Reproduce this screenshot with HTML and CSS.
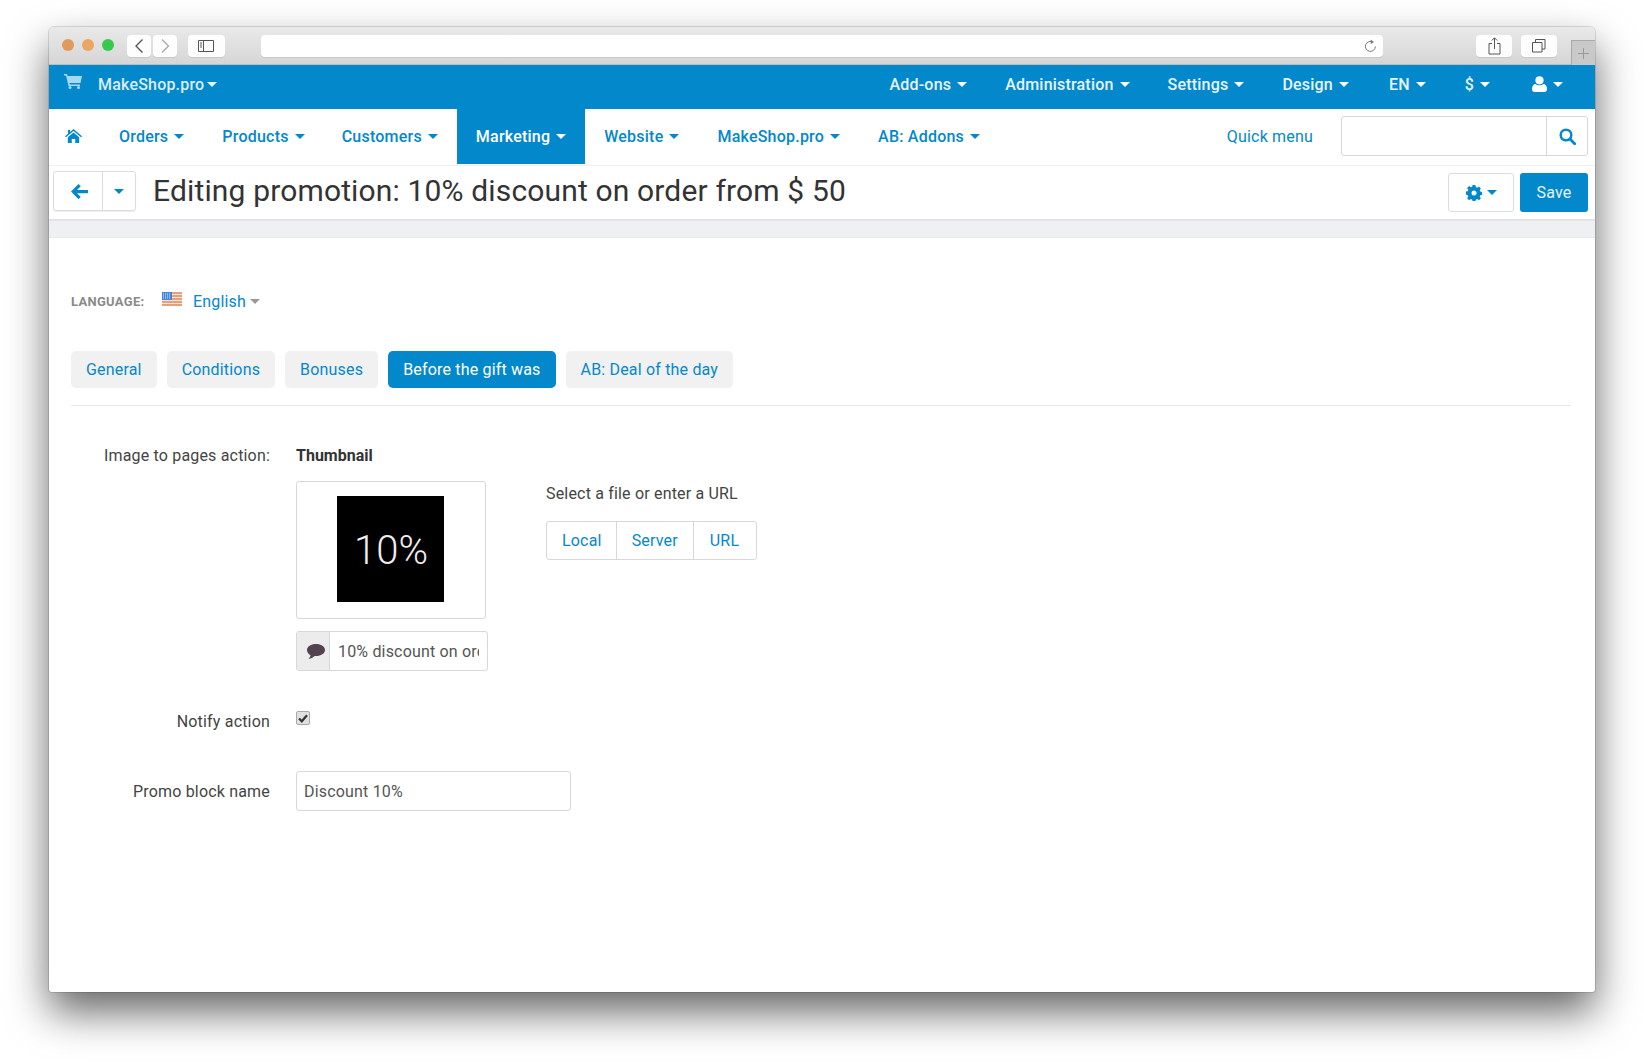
FILE: index.html
```html
<!DOCTYPE html>
<html lang="en">
<head>
<meta charset="utf-8">
<title>Editing promotion</title>
<link rel="stylesheet" href="styles.css">
</head>
<body>
<div class="window">
  <header class="chrome">
    <div class="lights"><i class="light red"></i><i class="light amber"></i><i class="light green"></i></div>
    <span class="cbtn nav-prev"><svg width="12" height="16" viewBox="0 0 12 16"><path d="M9.5 1.5 3 8l6.5 6.5" fill="none" stroke="#555" stroke-width="1.4"/></svg></span>
    <span class="cbtn nav-next"><svg width="12" height="16" viewBox="0 0 12 16"><path d="M3 1.5 9.5 8 3 14.5" fill="none" stroke="#aaa" stroke-width="1.4"/></svg></span>
    <span class="cbtn sidebar"><svg width="16" height="13" viewBox="0 0 16 13"><path d="M.5.5h15v11H.5zM5.5.5v11M2 3h2M2 5h2M2 7h2" fill="none" stroke="#555" stroke-width="1"/></svg></span>
    <span class="urlbar"><svg width="13" height="14" viewBox="0 0 13 14"><path d="M8.8 3A5 5 0 1 0 11.4 7.5" fill="none" stroke="#777" stroke-width="1"/><path d="M6.5.6 10 3 6.8 5z" fill="#777"/></svg></span>
    <span class="cbtn share"><svg width="13" height="18" viewBox="0 0 13 18"><path d="M4 6.5H1v10.5h11V6.500H9M6.500 12V1M3.800 3.500 6.500.8l2.700 2.700" fill="none" stroke="#555" stroke-width="1"/></svg></span>
    <span class="cbtn tabs-btn"><svg width="14" height="14" viewBox="0 0 14 14"><path d="M.5 3.500h9.500v9.500H.5zM3.500 3.500V.5H13v9.500h-3" fill="none" stroke="#555" stroke-width="1"/></svg></span>
    <span class="newtab"><svg width="11" height="11" viewBox="0 0 11 11"><path d="M5.500 0v11M0 5.500h11" stroke="#999" stroke-width="1"/></svg></span>
  </header>

  <div class="topbar">
    <a class="brand-icon"><svg width="18" height="15" viewBox="0 0 18 15"><path d="M0 0h3l.6 2H18l-1.500 7H5.500l.4 1.500H16V12H4.500L2 1.500H0z" fill="#a9d8f5"/><circle cx="6" cy="13.500" r="1.500" fill="#a9d8f5"/><circle cx="14.500" cy="13.500" r="1.500" fill="#a9d8f5"/></svg></a>
    <a class="brand">MakeShop.pro<i class="caret caret-light"></i></a>
    <nav class="topmenu">
      <a class="tm addons">Add-ons<i class="caret"></i></a>
      <a class="tm admin">Administration<i class="caret"></i></a>
      <a class="tm settings">Settings<i class="caret"></i></a>
      <a class="tm designm">Design<i class="caret"></i></a>
      <a class="tm en">EN<i class="caret"></i></a>
      <a class="tm dollar">$<i class="caret"></i></a>
      <a class="tm usr"><svg width="15" height="16" viewBox="0 0 15 16"><circle cx="7.500" cy="4.300" r="4.100" fill="#fff"/><path d="M0 13c0-3 1.500-5 3.500-5 1 .8 2.500 1.300 4 1.300s3-.5 4-1.300c2 0 3.500 2 3.500 5 0 2-1 3-2.500 3h-10C1 16 0 15 0 13z" fill="#fff"/></svg><i class="caret"></i></a>
    </nav>
  </div>

  <div class="mainnav">
    <a class="home"><svg width="17" height="14" viewBox="0 0 17 14"><path d="M8.500 0 17 7.200l-1 1.100-7.500-6.300L1 8.300 0 7.200l3-2.500V1h2.200v1.900zM2.800 8.300 8.500 3.500l5.700 4.800V14h-4V10H6.800v4h-4z" fill="#0388cc"/></svg></a>
    <a class="mi orders">Orders<i class="caret caret-blue"></i></a>
    <a class="mi products">Products<i class="caret caret-blue"></i></a>
    <a class="mi customers">Customers<i class="caret caret-blue"></i></a>
    <a class="mi active">Marketing<i class="caret"></i></a>
    <a class="mi website">Website<i class="caret caret-blue"></i></a>
    <a class="mi mshop">MakeShop.pro<i class="caret caret-blue"></i></a>
    <a class="mi addons2">AB: Addons<i class="caret caret-blue"></i></a>
    <a class="quick">Quick menu</a>
    <div class="search">
      <span class="search-field"></span>
      <span class="search-btn"><svg width="17" height="17" viewBox="0 0 17 17"><circle cx="7" cy="7" r="5.300" fill="none" stroke="#0388cc" stroke-width="2.500"/><path d="m11 11 4.700 4.700" stroke="#0388cc" stroke-width="2.800" stroke-linecap="round"/></svg></span>
    </div>
  </div>

  <div class="toolbar">
    <div class="backgroup">
      <span class="back"><svg width="17" height="15" viewBox="0 0 17 15"><path d="M7.500 0 9.800 2.300 6 6h11v3.200H6l3.800 3.700-2.300 2.300L0 7.600z" fill="#0388cc"/></svg></span>
      <span class="backdrop"><i class="caret caret-blue"></i></span>
    </div>
    <h1 class="title">Editing promotion: 10% discount on order from $ 50</h1>
    <span class="gearbtn"><svg width="16" height="16" viewBox="0 0 16 16"><path d="M6.600 0h2.800l.4 2.100 1.300.6 1.800-1.200 2 2-1.200 1.800.6 1.300 2.100.4v2.800l-2.100.4-.6 1.300 1.200 1.800-2 2-1.800-1.200-1.300.6-.4 2.100H6.600l-.4-2.100-1.300-.6-1.800 1.200-2-2 1.200-1.800-.6-1.300L-.4 9.400V6.600l2.100-.4.600-1.300L1.100 3.100l2-2 1.800 1.200 1.300-.6z" fill="#0388cc"/><circle cx="8" cy="8" r="2.500" fill="#fff"/></svg><i class="caret caret-blue"></i></span>
    <span class="save">Save</span>
  </div>
  <div class="band"></div>

  <main class="content">
    <div class="langrow">
      <span class="langlabel">LANGUAGE:</span>
      <svg class="flag" width="20" height="14" viewBox="0 0 20 14"><rect width="20" height="14" fill="#f4e3d8"/><path d="M0 1h20M0 4h20M0 7h20M0 10h20M0 13h20" stroke="#e08a5a" stroke-width="1.500"/><rect width="10" height="8" fill="#4a86d8"/><path d="M1 2h8M1 4h8M1 6h8" stroke="#cfe2f7" stroke-dasharray="1 1"/></svg>
      <a class="langlink">English</a><i class="caret caret-grey"></i>
    </div>

    <div class="tabs">
      <a class="tab">General</a>
      <a class="tab">Conditions</a>
      <a class="tab">Bonuses</a>
      <a class="tab tab-on">Before the gift was</a>
      <a class="tab">AB: Deal of the day</a>
    </div>

    <div class="row row-image">
      <span class="label">Image to pages action:</span>
      <div class="imagecol">
        <strong class="thumbtitle">Thumbnail</strong>
        <div class="thumbbox"><span class="thumb">10%</span></div>
        <div class="altgroup">
          <span class="altaddon"><svg width="18" height="15" viewBox="0 0 18 15"><path d="M9 0c5 0 9 2.600 9 6s-4 6-9 6H7.600C6 13.500 4 14.500 1.500 15c1-1 1.700-2 2-3.700C1.400 10.200 0 8.200 0 6c0-3.400 4-6 9-6z" fill="#53424f"/></svg></span>
          <input class="altinput" type="text" value="10% discount on order from $ 50" aria-label="Alt text">
        </div>
      </div>
      <div class="filecol">
        <p class="filetext">Select a file or enter a URL</p>
        <div class="filebtns">
          <a class="fb fb-local">Local</a><a class="fb">Server</a><a class="fb fb-url">URL</a>
        </div>
      </div>
    </div>

    <div class="row row-notify">
      <span class="label">Notify action</span>
      <span class="check"><svg width="10" height="9" viewBox="0 0 10 9"><path d="M1 4.500 3.800 7.300 9 1.200" fill="none" stroke="#333" stroke-width="2.200"/></svg></span>
    </div>

    <div class="row row-promo">
      <span class="label">Promo block name</span>
      <input class="promoinput" type="text" value="Discount 10%" aria-label="Promo block name">
    </div>
  </main>
</div>
</body>
</html>
```
FILE: styles.css
```css
* { box-sizing: border-box; }
html, body { height: 100%; }
body {
  margin: 0;
  background: #fff;
  font-family: Roboto, "Liberation Sans", sans-serif;
  font-size: 16px;
  letter-spacing: .18px;
  color: #444;
  overflow: hidden;
  padding: 27px 49px 0;
}
a { color: #0388cc; text-decoration: none; }
i { display: inline-block; font-style: normal; }

.window {
  width: 1546px;
  height: 965px;
  background: #fff;
  border-radius: 5px 5px 3px 3px;
  box-shadow: 0 20px 42px rgba(0,0,0,.6), 0 0 0 1px rgba(0,0,0,.12);
  overflow: hidden;
  display: flex;
  flex-direction: column;
}

/* browser chrome */
.chrome {
  height: 38px;
  flex: none;
  display: flex;
  align-items: flex-start;
  padding: 8px 0 0 13px;
  background: linear-gradient(#e9e9e9, #d6d6d6);
  border-bottom: 1px solid #bdbdbd;
}
.lights { display: flex; gap: 8px; padding-top: 4px; margin-right: 12px; }
.light { width: 12px; height: 12px; border-radius: 50%; }
.red { background: #e29a5a; }
.amber { background: #eba661; }
.green { background: #37c94b; }
.cbtn {
  height: 22px;
  background: #fdfdfd;
  border-radius: 4px;
  display: flex;
  align-items: center;
  justify-content: center;
  box-shadow: 0 1px 0 #c8c8c8;
}
.nav-prev { width: 24px; margin-left: 1px; }
.nav-next { width: 24px; margin-left: 2px; }
.sidebar { width: 37px; margin-left: 11px; }
.urlbar {
  width: 1125px;
  height: 22px;
  margin-left: 36px;
  background: #fff;
  border-radius: 4px;
  box-shadow: 0 1px 0 #c8c8c8;
  display: flex;
  align-items: center;
  justify-content: flex-end;
  padding-right: 6px;
}
.share { width: 36px; margin-left: 93px; }
.tabs-btn { width: 36px; margin-left: 9px; }
.newtab {
  width: 24px;
  height: 25px;
  margin: 5px 0 0 14px;
  background: #c9c9c9;
  border-left: 1px solid #aaa;
  border-top: 1px solid #aaa;
  display: flex;
  align-items: center;
  justify-content: center;
}

/* blue bar */
.topbar {
  height: 44px;
  flex: none;
  padding-bottom: 6px;
  background: #0388cc;
  display: flex;
  align-items: center;
  color: #fff;
  font-weight: 500;
  letter-spacing: .2px;
}
.brand-icon { display: flex; margin: -6px 0 0 15px; }
.brand { color: #d9eefa; margin-left: 16px; display: flex; align-items: center; }
.brand .caret { margin-left: 3px; }
.topmenu { display: flex; margin-left: auto; align-items: center; }
.tm { color: #e6f4fc; display: flex; align-items: center; white-space: nowrap; }
.tm .caret { margin-left: 6px; }
.addons { margin-right: 38px; }
.admin { margin-right: 38px; }
.settings { margin-right: 38px; }
.designm { margin-right: 40px; }
.en { margin-right: 39px; }
.dollar { margin-right: 42px; }
.usr { margin-right: 32px; }

.caret {
  width: 0;
  height: 0;
  border-left: 5px solid transparent;
  border-right: 5px solid transparent;
  border-top: 5px solid #fff;
}
.caret-light { border-top-color: #e6f4fc; }
.caret-blue { border-top-color: #0388cc; }
.caret-grey { border-top-color: #999; }

/* main nav */
.mainnav {
  height: 57px;
  flex: none;
  display: flex;
  align-items: stretch;
  border-bottom: 1px solid #eef0f2;
  font-weight: 500;
  letter-spacing: .22px;
}
.home { display: flex; align-items: center; margin: 0 18px 0 16px; padding-bottom: 3px; }
.mi { display: flex; align-items: center; padding: 0 19px; white-space: nowrap; margin-bottom: 1px; }
.mi .caret { margin-left: 6px; }
.products { padding-right: 18px; }
.active { background: #0388cc; color: #fff; }
.quick { align-self: center; font-weight: 400; margin: 0 28px 2px auto; letter-spacing: .18px; }
.search {
  align-self: center;
  width: 247px;
  height: 40px;
  margin: 0 7px 2px 0;
  display: flex;
  border: 1px solid #d8d8d8;
  border-radius: 3px;
}
.search-field { flex: 1; }
.search-btn {
  width: 41px;
  border-left: 1px solid #d8d8d8;
  display: flex;
  align-items: center;
  justify-content: center;
}

/* toolbar */
.toolbar {
  height: 55px;
  flex: none;
  display: flex;
  align-items: flex-start;
  padding: 5px 7px 0 4px;
  border-bottom: 2px solid #e2e4e7;
}
.backgroup {
  display: flex;
  height: 40px;
  border: 1px solid #dcdcdc;
  border-radius: 3px;
  box-shadow: 0 1px 1px #eee;
}
.back { width: 49px; padding-left: 2px; display: flex; align-items: center; justify-content: center; border-right: 1px solid #dcdcdc; }
.backdrop { width: 32px; display: flex; align-items: center; justify-content: center; }
.title {
  margin: 1px 0 0 17px;
  font-size: 30px;
  font-weight: 400;
  line-height: 38px;
  letter-spacing: .15px;
  color: #333;
  flex: 1;
}
.gearbtn {
  width: 66px;
  height: 39px;
  margin-top: 2px;
  border: 1px solid #dcdcdc;
  border-radius: 3px;
  display: flex;
  align-items: center;
  justify-content: center;
  gap: 5px;
}
.save {
  width: 68px;
  height: 39px;
  margin: 2px 0 0 6px;
  background: #0388cc;
  color: #e6f4fc;
  border-radius: 3px;
  display: flex;
  align-items: center;
  justify-content: center;
}
.band { height: 17px; flex: none; background: #eef0f3; border-bottom: 1px solid #e6e8ea; }

/* content */
.content { flex: 1; padding: 50px 24px 0 22px; }
.langrow { display: flex; align-items: center; height: 26px; }
.langlabel { font-size: 13px; font-weight: 700; color: #8a8a8a; width: 91px; letter-spacing: .3px; padding-top: 1px; }
.flag { margin: -4px 11px 0 0; }
.langlink { margin-right: 4px; }

.tabs {
  display: flex;
  gap: 10px;
  margin-top: 37px;
  padding-bottom: 17px;
  border-bottom: 1px solid #e8e8e8;
}
.tab {
  height: 37px;
  line-height: 37px;
  padding: 0 15px;
  background: #f1f1f1;
  border-radius: 5px;
  white-space: nowrap;
}
.tab-on { background: #0388cc; color: #fff; }

.row { display: flex; }
.label { width: 199px; margin-right: 26px; text-align: right; flex: none; }
.row-image { margin-top: 38px; }
.row-image .label { line-height: 24px; }
.imagecol { width: 250px; flex: none; }
.thumbtitle { display: block; line-height: 24px; font-weight: 700; color: #333; letter-spacing: 0; }
.thumbbox {
  width: 190px;
  height: 138px;
  margin-top: 13px;
  border: 1px solid #d8d8d8;
  border-radius: 3px;
  display: flex;
  align-items: center;
  justify-content: center;
}
.thumb {
  width: 107px;
  height: 106px;
  margin: -3px 0 0 -2px;
  padding: 4px 0 0 2px;
  background: #000;
  color: #eee;
  font-size: 40px;
  font-weight: 300;
  letter-spacing: 0;
  display: flex;
  align-items: center;
  justify-content: center;
}
.altgroup {
  width: 192px;
  height: 40px;
  margin-top: 12px;
  display: flex;
  border: 1px solid #d8d8d8;
  border-radius: 3px;
}
.altaddon {
  width: 33px;
  flex: none;
  padding-left: 6px;
  background: #ececec;
  border-right: 1px solid #d8d8d8;
  display: flex;
  align-items: center;
  justify-content: center;
}
.altinput {
  width: 100%;
  min-width: 0;
  border: 0;
  outline: 0;
  margin: 0 8px;
  padding: 0;
  background: transparent;
  font: 400 16px Roboto, sans-serif;
  letter-spacing: .18px;
  color: #555;
}
.filecol { padding-top: 38px; }
.filetext { margin: 0; line-height: 24px; color: #444; }
.filebtns {
  display: flex;
  width: 211px;
  height: 39px;
  margin-top: 15px;
  border: 1px solid #d8d8d8;
  border-radius: 3px;
}
.fb {
  display: flex;
  align-items: center;
  padding: 0 15px;
  border-left: 1px solid #d8d8d8;
}
.fb:first-child { border-left: 0; }
.fb-local { padding-right: 14px; }
.fb-url { padding-left: 16px; }

.row-notify { margin-top: 39px; align-items: flex-start; }
.row-notify .label { line-height: 24px; }
.check {
  width: 14px;
  height: 14px;
  margin-top: 1px;
  background: #e0e0e0;
  border: 1px solid #a8a8a8;
  border-radius: 2px;
  display: flex;
  align-items: center;
  justify-content: center;
}
.row-promo { margin-top: 37px; align-items: center; }
.promoinput {
  width: 275px;
  height: 40px;
  border: 1px solid #d8d8d8;
  border-radius: 3px;
  outline: 0;
  padding: 0 7px;
  font: 400 16px Roboto, sans-serif;
  letter-spacing: .18px;
  color: #555;
}
```
